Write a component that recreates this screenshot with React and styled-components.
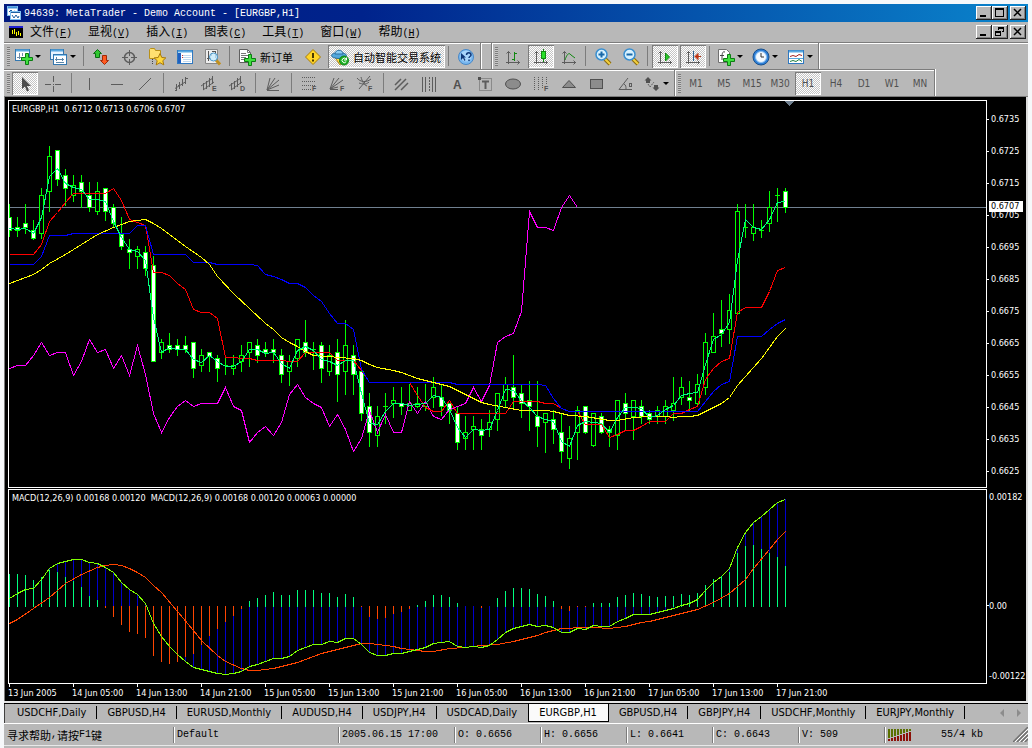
import styled, { createGlobalStyle, css } from "styled-components";

const STEP = 8;
const LEFT = 9;
const ZERO = 606;

// [high, body top, body bottom, low, filled]
const candles = [
  [204, 217, 230, 236, 1], [217, 227, 230, 236, 1], [204, 223, 227, 233, 1], [220, 230, 238, 239, 1],
  [188, 195, 233, 238, 0], [146, 156, 191, 211, 0], [150, 150, 179, 185, 1], [169, 175, 188, 205, 1],
  [175, 185, 195, 201, 0], [175, 182, 191, 207, 1], [182, 195, 207, 211, 1], [182, 191, 211, 214, 0],
  [188, 188, 211, 220, 1], [204, 207, 223, 226, 1], [217, 234, 246, 249, 1], [239, 249, 252, 268, 1],
  [246, 249, 256, 268, 0], [246, 252, 268, 275, 1], [256, 265, 361, 361, 1], [339, 342, 352, 358, 0],
  [333, 345, 349, 352, 1], [339, 345, 349, 355, 1], [336, 345, 349, 352, 1], [342, 342, 368, 377, 1],
  [349, 355, 365, 371, 0], [352, 352, 356, 371, 1], [355, 358, 368, 381, 1], [358, 365, 365, 374, 0],
  [355, 365, 368, 374, 0], [345, 355, 361, 371, 0], [342, 342, 352, 366, 0], [339, 345, 355, 362, 1],
  [342, 349, 352, 356, 1], [339, 349, 352, 362, 1], [349, 355, 374, 382, 1], [355, 361, 371, 385, 0],
  [339, 339, 358, 366, 0], [320, 342, 352, 356, 1], [342, 349, 349, 369, 0], [342, 345, 368, 382, 1],
  [345, 355, 371, 375, 0], [339, 352, 374, 401, 1], [320, 345, 371, 394, 0], [345, 355, 374, 394, 1],
  [371, 371, 413, 420, 1], [393, 406, 432, 446, 1], [406, 416, 435, 446, 0], [393, 406, 406, 423, 0],
  [387, 400, 403, 417, 0], [387, 403, 406, 414, 1], [384, 403, 410, 410, 0], [387, 403, 406, 407, 0],
  [384, 403, 406, 410, 0], [377, 387, 397, 407, 0], [384, 397, 406, 415, 1], [403, 403, 410, 423, 1],
  [406, 413, 442, 449, 1], [416, 432, 438, 449, 0], [416, 426, 429, 449, 0], [419, 429, 435, 449, 1],
  [410, 422, 429, 436, 0], [393, 393, 419, 430, 0], [377, 384, 400, 407, 0], [355, 387, 397, 407, 1],
  [384, 393, 403, 417, 1], [381, 400, 406, 430, 1], [381, 416, 426, 446, 1], [413, 413, 422, 452, 0],
  [410, 419, 429, 443, 1], [413, 432, 451, 462, 1], [426, 438, 458, 468, 0], [406, 410, 432, 459, 0],
  [406, 406, 432, 433, 1], [413, 413, 445, 446, 0], [413, 416, 432, 433, 1], [426, 429, 432, 446, 1],
  [400, 400, 435, 449, 0], [393, 403, 413, 430, 1], [400, 400, 416, 439, 0], [400, 406, 416, 423, 1],
  [410, 413, 419, 423, 1], [406, 410, 416, 423, 0], [400, 406, 416, 423, 0], [377, 403, 410, 420, 0],
  [377, 387, 397, 404, 0], [381, 397, 400, 410, 1], [374, 384, 403, 406, 0], [333, 342, 387, 394, 0],
  [313, 336, 352, 352, 0], [300, 329, 333, 346, 1], [294, 310, 329, 343, 0], [204, 211, 313, 314, 0],
  [204, 227, 227, 237, 0], [204, 227, 233, 240, 0], [220, 230, 230, 237, 0], [191, 207, 223, 231, 0],
  [188, 195, 195, 221, 0], [188, 191, 207, 212, 1],
];

// one value per bar
const tenkan = [
  228, 229, 228, 233, 217, 176, 168, 183, 187, 189, 199, 199, 201, 221, 237, 249, 251, 260, 317, 352,
  347, 349, 349, 359, 362, 355, 361, 366, 366, 361, 349, 349, 353, 352, 363, 368, 350, 346, 350, 359,
  361, 365, 360, 360, 393, 423, 424, 411, 403, 403, 405, 404, 403, 395, 397, 409, 427, 437, 429, 430,
  429, 410, 389, 390, 400, 407, 416, 419, 421, 441, 446, 425, 421, 422, 423, 432, 417, 407, 407, 408,
  417, 415, 409, 405, 395, 393, 392, 364, 339, 334, 322, 260, 219, 227, 229, 219, 202, 201,
];
const chikou = [
  368, 365, 365, 355, 342, 355, 352, 352, 375, 361, 339, 352, 349, 368, 355, 375, 345, 374, 413, 432,
  417, 406, 400, 406, 403, 403, 403, 387, 406, 410, 442, 432, 426, 435, 422, 394, 384, 397, 403, 407,
  426, 414, 429, 451, 438, 410, 432, 414, 432, 432, 401, 413, 401, 416, 419, 409, 406, 403, 387, 401,
  385, 342, 336, 333, 311, 211, 227, 227, 230, 207, 195, 207,
];
const macd = [
  598, 593, 589, 588, 579, 568, 563, 561, 559, 559, 562, 563, 567, 572, 582, 589, 594, 603, 623, 636,
  646, 654, 661, 667, 669, 671, 673, 674, 673, 671, 666, 664, 661, 658, 658, 656, 650, 647, 644, 644,
  641, 642, 638, 638, 644, 652, 655, 655, 653, 653, 651, 649, 647, 643, 642, 641, 646, 647, 646, 647,
  645, 639, 632, 628, 626, 624, 626, 625, 627, 632, 632, 628, 629, 625, 626, 626, 621, 618, 614, 614,
  614, 612, 610, 608, 605, 603, 599, 590, 582, 576, 568, 547, 532, 522, 516, 509, 502, 499,
];
const osma = [
  32, 32, 31, 26, 29, 36, 34, 29, 25, 19, 10, 6, -2, -11, -19, -26, -28, -32, -50, -56, -58, -56, -51,
  -48, -39, -30, -23, -16, -10, -3, 5, 8, 11, 14, 11, 11, 16, 16, 16, 13, 13, 9, 12, 9, -1, -11, -13,
  -12, -8, -6, -3, 1, 5, 11, 11, 9, 3, 0, 0, -2, 0, 8, 15, 18, 18, 17, 12, 10, 5, -3, -5, -1, -1, 3, 3,
  3, 9, 11, 13, 12, 10, 9, 10, 10, 12, 11, 13, 21, 27, 30, 34, 53, 60, 61, 57, 53, 49, 40,
];

// [bar, y] break points
const kijun = [
  [0, 254], [3, 254], [4, 244], [5, 221], [6, 212], [7, 202], [8, 193], [12, 193], [13, 188], [14, 200],
  [15, 219], [16, 222], [17, 225], [18, 272], [19, 272], [20, 275], [21, 283], [22, 289], [23, 309],
  [24, 312], [25, 312], [26, 318], [27, 357], [28, 357], [29, 358], [30, 358], [31, 360], [34, 360],
  [35, 361], [36, 361], [37, 352], [40, 352], [41, 360], [43, 360], [44, 370], [45, 382], [50, 382],
  [51, 395], [52, 407], [53, 411], [54, 411], [55, 400], [56, 413], [62, 413], [63, 401], [66, 401],
  [67, 403], [68, 403], [69, 408], [70, 411], [71, 411], [72, 424], [74, 424], [75, 437], [76, 434],
  [77, 430], [78, 430], [79, 426], [80, 421], [82, 421], [83, 413], [84, 413], [85, 409], [86, 406],
  [87, 379], [88, 368], [89, 361], [90, 358], [91, 312], [92, 307], [94, 307], [95, 291], [96, 270],
  [97, 267],
];
const senkou = [
  [0, 264], [3, 264], [4, 256], [5, 235], [7, 235], [8, 233], [15, 233], [16, 225], [17, 225], [18, 254],
  [22, 254], [23, 262], [25, 262], [26, 264], [30, 264], [31, 265], [32, 274], [33, 276], [34, 279],
  [35, 283], [36, 283], [37, 287], [38, 295], [39, 301], [40, 313], [41, 323], [42, 323], [43, 329],
  [44, 369], [45, 382], [55, 382], [56, 384], [66, 384], [67, 385], [68, 398], [69, 408], [70, 411],
  [86, 411], [87, 401], [88, 391], [89, 384], [90, 381], [91, 336], [94, 336], [95, 329], [96, 323],
  [97, 319],
];
const average = [
  [0, 283], [3, 274], [4, 269], [5, 263], [7, 254], [9, 244], [11, 234], [13, 227], [15, 221], [17, 219],
  [18, 223], [19, 228], [22, 246], [24, 257], [25, 264], [26, 276], [28, 293], [30, 308], [32, 323],
  [33, 329], [34, 337], [35, 342], [36, 346], [37, 351], [38, 355], [40, 356], [41, 357], [43, 358],
  [44, 360], [45, 364], [46, 367], [48, 370], [49, 372], [51, 378], [53, 382], [55, 386], [57, 394],
  [59, 402], [60, 404], [62, 407], [64, 410], [67, 410], [68, 411], [70, 415], [72, 416], [75, 420],
  [76, 420], [78, 417], [80, 416], [82, 416], [83, 417], [84, 416], [85, 416], [86, 415], [87, 411],
  [88, 407], [89, 403], [90, 397], [91, 385], [92, 376], [93, 367], [94, 358], [95, 347], [96, 336],
  [97, 328],
];
const signal = [
  [0, 623], [1, 619], [3, 608], [5, 597], [7, 583], [9, 574], [11, 567], [12, 565], [13, 564], [14, 565],
  [15, 568], [16, 572], [17, 577], [18, 585], [19, 592], [21, 611], [23, 630], [24, 640], [26, 655],
  [27, 661], [29, 668], [30, 670], [31, 670], [33, 668], [36, 662], [39, 653], [42, 647], [43, 645],
  [44, 643], [45, 643], [47, 645], [48, 646], [49, 648], [50, 649], [52, 651], [53, 651], [55, 648],
  [57, 647], [59, 645], [61, 644], [63, 641], [66, 635], [67, 632], [69, 628], [72, 627], [73, 627],
  [75, 628], [77, 626], [79, 622], [80, 621], [83, 615], [86, 609], [88, 602], [90, 593], [92, 579],
  [93, 568], [95, 549], [96, 539], [97, 531],
];

const x = (bar) => LEFT + bar * STEP;
const toPoints = (list) =>
  list
    .map((item, i) => (Array.isArray(item) ? [x(item[0]), item[1]] : [x(i), item]))
    .map(([px, py]) => `${px + 0.5},${py + 0.5}`)
    .join(" ");

const prices = ["0.6735", "0.6725", "0.6715", "0.6705", "0.6695", "0.6685", "0.6675", "0.6665", "0.6655", "0.6645", "0.6635", "0.6625"];
const times = [
  "13 Jun 2005", "14 Jun 05:00", "14 Jun 13:00", "14 Jun 21:00", "15 Jun 05:00", "15 Jun 13:00", "15 Jun 21:00",
  "16 Jun 05:00", "16 Jun 13:00", "16 Jun 21:00", "17 Jun 05:00", "17 Jun 13:00", "17 Jun 21:00",
];
const menus = [["文件", "F"], ["显视", "V"], ["插入", "I"], ["图表", "C"], ["工具", "T"], ["窗口", "W"], ["帮助", "H"]];
const periods = ["M1", "M5", "M15", "M30", "H1", "H4", "D1", "W1", "MN"];
const tabs = [
  "USDCHF,Daily", "GBPUSD,H4", "EURUSD,Monthly", "AUDUSD,H4", "USDJPY,H4", "USDCAD,Daily",
  "EURGBP,H1", "GBPUSD,H4", "GBPJPY,H4", "USDCHF,Monthly", "EURJPY,Monthly",
];

/* ---------- icons ---------- */

const Plus = ({ dx = 0, dy = 0 }) => (
  <path
    transform={`translate(${dx} ${dy})`}
    d="M4.5 .5h3v4h4v3h-4v4h-3v-4h-4v-3h4z"
    fill="#3fe03f"
    stroke="#0b7d12"
  />
);
const Axes = ({ color = "#5c5c5c" }) => (
  <path d="M4.5 16V3.5M2.5 5.5l2-2 2 2M2 14.5h14M13.5 12.5l2 2-2 2" fill="none" stroke={color} />
);
const Letter = ({ children }) => (
  <text x="12" y="16" fontSize="7" fontWeight="700" fontFamily="Liberation Sans" fill="#505050">
    {children}
  </text>
);
const Lens = ({ minus }) => (
  <>
    <path d="M11 11l5 5" stroke="#8a6a10" strokeWidth="4" />
    <path d="M11 11l5 5" stroke="#f2d040" strokeWidth="2" />
    <circle cx="7.5" cy="6.5" r="5.5" fill="#d8f2ff" stroke="#3a8fd0" strokeWidth="1.5" />
    <path d={minus ? "M4.5 6.5h6" : "M4.5 6.5h6M7.5 3.5v6"} stroke="#1868a8" strokeWidth="2" />
  </>
);

const gray = { fill: "none", stroke: "#5c5c5c" };

const icons = {
  newChart: (
    <>
      <rect x=".5" y="1.5" width="14" height="11" fill="#fff" stroke="#3478b0" />
      <path d="M1 2.5h13" stroke="#58a8e0" strokeWidth="2" />
      <path d="M4.5 5v6M2 9.5h7M7.5 5v3" stroke="#6a8aa8" />
      <Plus dx={6} dy={5} />
    </>
  ),
  profiles: (
    <>
      <rect x=".5" y="1.5" width="13" height="10" fill="#e8f4ff" stroke="#3478b0" />
      <path d="M1 2.5h12" stroke="#58a8e0" strokeWidth="2" />
      <rect x="3.5" y="6.5" width="13" height="10" fill="#fff" stroke="#3478b0" />
      <path d="M4 7.5h12" stroke="#8cc8f0" />
      <path d="M6.5 9v4M5 11.5h9M12.5 10v3M6 14.5h8" stroke="#5a86a8" />
    </>
  ),
  market: (
    <>
      <path d="M5.500 1.500l4 4h-2v4h-4v-4h-2z" fill="#30c830" stroke="#0b6d12" />
      <path d="M12.500 16.500l-4-4h2v-5h4v5h2z" fill="#ff5a20" stroke="#a02808" />
    </>
  ),
  target: (
    <g fill="none" stroke="#5c5c5c">
      <circle cx="9.5" cy="9.5" r="5" strokeWidth="1.5" />
      <path d="M9.5 2v6M9.5 11v6M2 9.5h6M11 9.5h6" />
    </g>
  ),
  navigator: (
    <>
      <path d="M1.5 10.500v-9l1-1h4l1 2h5v8z" fill="#ffe070" stroke="#b89018" />
      <path d="M4.5 11v5" stroke="#444" strokeDasharray="1 1" />
      <path d="M12 5.5l1.800 4 4 .4-3 2.800 1 4.200-3.800-2.200-3.800 2.200 1-4.200-3-2.800 4-.4z" fill="#ffd83c" stroke="#a87808" />
    </>
  ),
  terminal: (
    <>
      <rect x="1.5" y="2.5" width="15" height="13" fill="#fff" stroke="#2f78c0" />
      <path d="M2 3.5h14" stroke="#58a8e0" strokeWidth="2" />
      <path d="M3.5 5v10" stroke="#2060c0" strokeWidth="3" />
      <path d="M7 7.5h8M7 9.5h8M7 11.5h8M7 13.5h8" stroke="#c0d8ee" />
      <path d="M6 7.5h1M6 9.5h1" stroke="#d03030" />
    </>
  ),
  tester: (
    <>
      <path d="M1.5 1.5h12v14h-12z" fill="#eee" stroke="#888" />
      <path d="M4.5 3v10M7.5 5v3M11.5 3v7M3 10.5h4M8 3.5h4" stroke="#555" />
      <path d="M12 12l4 4.500" stroke="#c09020" strokeWidth="3" />
      <circle cx="9.5" cy="9" r="4" fill="#c8ecff" fillOpacity=".8" stroke="#4a98cc" />
    </>
  ),
  order: (
    <>
      <path d="M1.5 1.5h8l3 3v10h-11z" fill="#fff" stroke="#606060" />
      <path d="M9.5 1.5v3h3M3 5.5h5M3 7.5h7M3 9.5h5M3 11.5h4" fill="none" stroke="#777" />
      <Plus dx={6} dy={6} />
    </>
  ),
  warning: (
    <>
      <path d="M9 1.5L16.5 9 9 16.5 1.5 9z" fill="#ffd428" stroke="#a87c08" />
      <path d="M9 5v5M9 11.5v2" stroke="#4a3800" strokeWidth="2" />
    </>
  ),
  expert: (
    <>
      <path d="M3 8l6 9 6-9z" fill="#ffd84a" stroke="#b08818" />
      <ellipse cx="8" cy="7.5" rx="7.5" ry="3" fill="#52a8dc" stroke="#2a6fa0" />
      <path d="M4 6c0-5 8-5 8 0z" fill="#8ccef4" stroke="#2a6fa0" />
      <circle cx="13" cy="12.5" r="4.5" fill="#20b428" stroke="#0b7d12" />
      <path d="M15 11a2.200 2.200 0 1 0 .2 2.500M15.500 9.500v2.500h-2.500" fill="none" stroke="#fff" />
    </>
  ),
  help: (
    <>
      <circle cx="9" cy="9" r="7.5" fill="#7ab8f0" stroke="#4888c8" />
      <circle cx="9" cy="8" r="5.5" fill="#a8d4fa" />
      <path d="M4 5v7l2-2 1.500 3 1-1L7 9.500h2z" fill="#103878" />
      <path d="M9.500 7c0-3 4.500-3 4.500 0 0 1.500-2 1.500-2 3M12 11.500v1.500" fill="none" stroke="#103878" strokeWidth="1.5" />
    </>
  ),
  bars: (
    <>
      <Axes />
      <path d="M10.5 4v9M8 11.5h2M11 5.5h2" stroke="#118811" />
    </>
  ),
  candle: (
    <>
      <Axes />
      <path d="M11.5 1v13" stroke="#118811" />
      <rect x="9.5" y="3.5" width="4" height="7" fill="#28e028" stroke="#118811" />
    </>
  ),
  line: (
    <>
      <Axes />
      <path d="M5 12c2-6 4-8 6-5l4 3" fill="none" stroke="#118811" />
    </>
  ),
  zoomIn: <Lens />,
  zoomOut: <Lens minus />,
  scroll: (
    <>
      <Axes />
      <path d="M9.5 5l4 4-4 4z" fill="#28c828" stroke="#118811" />
    </>
  ),
  shift: (
    <>
      <Axes />
      <path d="M9.5 3v10" stroke="#2a6090" />
      <path d="M17 8.5h-6M14 5.5l-3 3 3 3z" fill="#d84018" stroke="#b83010" />
    </>
  ),
  indicator: (
    <>
      <path d="M1.5 1.5h8l3 3v10h-11z" fill="#fff" stroke="#707070" />
      <path d="M8 4c-3-1-3 2-3 8M3 7.5h4" fill="none" stroke="#444" />
      <Plus dx={6} dy={6} />
    </>
  ),
  clock: (
    <>
      <circle cx="9" cy="9" r="8" fill="#2f80d8" stroke="#18508c" />
      <circle cx="9" cy="9" r="5.5" fill="#f4faff" stroke="#8cc0f0" />
      <path d="M9 5v4h3" fill="none" stroke="#333" />
    </>
  ),
  template: (
    <>
      <rect x="1.5" y="2.5" width="15" height="13" fill="#fff" stroke="#2f78c0" />
      <path d="M2 3.5h14" stroke="#58a8e0" strokeWidth="2" />
      <path d="M3 8.5l3-1 3 1 3-2 3 1" fill="none" stroke="#a02020" />
      <path d="M2 10.5h14" stroke="#58a8e0" />
      <path d="M3 13.5l3-1 3 1 3-2 3 2" fill="none" stroke="#208040" />
    </>
  ),
  cursor: <path d="M6 2v12l3-2.500 2 5 2-1-2-4.500h4z" fill="#4c4c4c" />,
  cross: <path d="M9.5 1v6M9.5 11v6M1 9.5h6M11 9.5h6M9 9.5h1" {...gray} />,
  vline: <path d="M9.5 3v12" {...gray} />,
  hline: <path d="M3 9.5h12" {...gray} />,
  trend: <path d="M3 15L15 3" {...gray} />,
  channel: <path d="M3 13.500l11-7M4.500 9v7M7.500 7v7M10.500 4v7M13.500 2v7M3 15.500h2M6 10.500h2M9 9.500h2M13 3.500h3" {...gray} />,
  channelE: (
    <>
      <path d="M1 11L13 3M3 15l11-8M3.5 8v7M6.5 6v8M9.5 3v9M12.5 1v8" {...gray} />
      <Letter>E</Letter>
    </>
  ),
  channelD: (
    <>
      <path d="M1 11L13 3M3 15l11-8M3.5 8v7M6.5 6v8M9.5 3v9M12.5 1v8" {...gray} />
      <Letter>D</Letter>
    </>
  ),
  fan: <path d="M3 15L6 3M3 15L11 3M3 15L15 5M3 15l12-5M3 15.5h12" {...gray} />,
  fibo: (
    <>
      <path d="M2 2.5h14M2 6.5h14M2 10.5h14M2 14.5h9" {...gray} strokeDasharray="1 1" />
      <Letter>F</Letter>
    </>
  ),
  fiboFan: (
    <>
      <path d="M2 14L6 3M2 14L11 3M2 14l13-9M2 14l8-2M2 14.500h8" {...gray} />
      <Letter>F</Letter>
    </>
  ),
  fiboArc: (
    <>
      <path d="M1 3c3 4 9 5 14 1M3 8c3 1 7 2 10-1M14 1L3 14M5 2c1 4 3 8 6 9" {...gray} />
      <Letter>F</Letter>
    </>
  ),
  parallels: <path d="M3 10l6-6M3 15L14 4M9 15l7-7" {...gray} strokeWidth="1.5" />,
  cycles: (
    <>
      <path d="M2.5 2v15M5.5 2v15M12.5 2v15M15.5 2v15" {...gray} />
      <path d="M9.5 2v15" {...gray} strokeDasharray="2 1" />
    </>
  ),
  text: (
    <text x="5" y="14" fontSize="12" fontWeight="700" fontFamily="Liberation Sans" fill="#505050">
      A
    </text>
  ),
  label: (
    <>
      <rect x="3.5" y="3.5" width="12" height="12" {...gray} strokeDasharray="1 1" />
      <path d="M6 6.5h7M9.5 6v8" {...gray} strokeWidth="2" />
      <path d="M2 2h3v3H2z" fill="#505050" />
    </>
  ),
  ellipse: <ellipse cx="9" cy="9" rx="7.5" ry="5" fill="#8c8c8c" stroke="#505050" />,
  zones: (
    <>
      <path d="M2.500 2v13M6.5 2v13M10.5 2v12M14.5 2v8" {...gray} strokeDasharray="1 1" />
      <Letter>F</Letter>
    </>
  ),
  triangle: <path d="M2.5 12.5L9 5.5l6.5 7z" fill="#8c8c8c" stroke="#505050" />,
  rect: <rect x="2.5" y="4.500" width="12" height="9" fill="#8c8c8c" stroke="#505050" />,
  angle: (
    <>
      <path d="M12 3L3 14.5h13M8 9c2 1 2 3 2 5" {...gray} />
      <rect x="13.500" y="8.500" width="2" height="3" {...gray} />
    </>
  ),
  arrows: (
    <>
      <path d="M5 2l3.500 3.500H7V8H3V5.500H1.500zM13 16l3.500-3.500H15V10h-4v2.500H9.500z" fill="#505050" />
      <path d="M5 9l2 3 4-5" {...gray} strokeDasharray="2 1" />
    </>
  ),
};

const Icon = ({ name }) => (
  <Glyph viewBox="0 0 18 18" aria-hidden="true">
    {icons[name]}
  </Glyph>
);

const Tool = ({ name, label, checked, split }) => (
  <ToolButton type="button" aria-label={label || name} $checked={checked} $split={split}>
    <Icon name={name} />
    {split && <Caret />}
  </ToolButton>
);

const WindowButtons = ({ restore }) => (
  <WindowControls>
    <WindowButton type="button" aria-label="minimize">
      <svg width="12" height="10"><path d="M2 8h6" stroke="#000" strokeWidth="2" /></svg>
    </WindowButton>
    <WindowButton type="button" aria-label="maximize">
      <svg width="12" height="10" shapeRendering="crispEdges" fill="none" stroke="#000">
        {restore ? (
          <path d="M4.5 3V.5h5v4H8M4 1.5h6M1.5 4.5h5v4h-5zM1 5.5h6" />
        ) : (
          <path d="M1.5 .5h8v8h-8zM1 1.5h9" />
        )}
      </svg>
    </WindowButton>
    <WindowButton type="button" aria-label="close" $last>
      <svg width="12" height="10"><path d="M2 1l7 7M9 1L2 8" stroke="#000" strokeWidth="1.5" /></svg>
    </WindowButton>
  </WindowControls>
);

/* ---------- charts ---------- */

const PriceChart = () => (
  <Plot $height={388}>
    <PlotTitle>EURGBP,H1{"  "}0.6712 0.6713 0.6706 0.6707</PlotTitle>
    <Canvas>
      <g transform={`translate(-${LEFT} -101)`}>
        <path d="M785 101h9l-4.5 5z" fill="#708090" />
        <path d="M0 207.5h4000" stroke="#708090" />
        {candles.map(([high, top, bottom, low, filled], i) => (
          <g key={i} stroke="#00ff00" fill={filled ? "#ffffff" : "#000000"}>
            <path d={`M${x(i) + 0.5} ${high}V${low + 1}`} />
            {top === bottom ? (
              <path d={`M${x(i) - 2} ${top + 0.5}h5`} />
            ) : (
              <rect x={x(i) - 1.5} y={top + 0.5} width="4" height={bottom - top} />
            )}
          </g>
        ))}
        <g fill="none">
          <polyline points={toPoints(chikou)} stroke="#ff00ff" />
          <polyline points={toPoints(kijun)} stroke="#ff0000" />
          <polyline points={toPoints(senkou)} stroke="#0000ff" />
          <polyline points={toPoints(average)} stroke="#ffff00" />
          <polyline points={toPoints(tenkan)} stroke="#00ff7f" />
        </g>
      </g>
    </Canvas>
  </Plot>
);

const MacdChart = () => (
  <Plot $height={195}>
    <PlotTitle>MACD(12,26,9) 0.00168 0.00120{"  "}MACD(12,26,9) 0.00168 0.00120 0.00063 0.00000</PlotTitle>
    <Canvas>
      <g transform={`translate(-${LEFT} -490)`} fill="none">
        {macd.map((y, i) => (
          <path key={i} d={`M${x(i) + 0.5} ${ZERO}V${y}`} stroke="#0000cd" />
        ))}
        {osma.map((v, i) =>
          v ? (
            <path
              key={i}
              d={`M${x(i) + 0.5} ${v > 0 ? ZERO + 1 : ZERO}V${ZERO - v}`}
              stroke={v > 0 ? "#00ff7f" : "#ff4500"}
            />
          ) : null
        )}
        <polyline points={toPoints(signal)} stroke="#ff4500" />
        <polyline points={toPoints(macd)} stroke="#7fff00" />
      </g>
    </Canvas>
  </Plot>
);

const App = () => {
  return (
    <>
      <GlobalStyle />
      <Page>
        <TitleBar>
          <svg width="16" height="16" viewBox="0 0 16 16" aria-hidden="true">
            <rect x="1.5" y="1.5" width="10" height="9" fill="#fff" stroke="#80c0f0" />
            <path d="M2 2.5h9" stroke="#4090d8" strokeWidth="2" />
            <path d="M3 7l2-2 2 2 2-1" fill="none" stroke="#2060a0" />
            <rect x="4.5" y="6.5" width="10" height="8" fill="#fff" stroke="#80c0f0" />
            <path d="M5 7.5h9M6 10l2 3 2-3 2 3 1-2" fill="none" stroke="#2060a0" />
          </svg>
          <Title>94639: MetaTrader - Demo Account - [EURGBP,H1]</Title>
          <WindowButtons />
        </TitleBar>

        <MenuBar>
          <svg width="14" height="12" viewBox="0 0 14 12" shapeRendering="crispEdges" aria-hidden="true">
            <path d="M0 0h14v12H0z" fill="#000" />
            <path d="M0 1h14" stroke="#2020d0" strokeWidth="2" />
            <path d="M3.5 4v4M5.5 3v5M7.5 6v4M9.5 5v4M11.5 7v3" stroke="#ffff00" />
          </svg>
          <Menus>
            {menus.map(([name, key]) => (
              <MenuItem key={key} type="button">
                {name}
                <Hotkey>
                  (<u>{key}</u>)
                </Hotkey>
              </MenuItem>
            ))}
          </Menus>
          <WindowButtons restore />
        </MenuBar>

        <ToolRow>
          <ToolBar>
            <Grip />
            <Tool name="newChart" split />
            <Tool name="profiles" split />
            <Separator />
            <Tool name="market" />
            <Tool name="target" />
            <Tool name="navigator" />
            <Tool name="terminal" />
            <Tool name="tester" />
            <Separator />
            <TextButton type="button">
              <Icon name="order" />
              新订单
            </TextButton>
            <Tool name="warning" />
            <TextButton type="button" $checked>
              <Icon name="expert" />
              自动智能交易系统
            </TextButton>
            <Separator />
            <Tool name="help" />
          </ToolBar>
          <EmptyBar />
          <ToolBar>
            <Grip />
            <Tool name="bars" />
            <Tool name="candle" checked />
            <Tool name="line" />
            <Separator />
            <Tool name="zoomIn" />
            <Tool name="zoomOut" />
            <Separator />
            <Tool name="scroll" checked />
            <Tool name="shift" checked />
            <Separator />
            <Tool name="indicator" split />
            <Tool name="clock" split />
            <Tool name="template" split />
          </ToolBar>
          <RowRest />
        </ToolRow>

        <ToolRow $last>
          <ToolBar>
            <Grip />
            <Tool name="cursor" checked />
            <Tool name="cross" />
            <Separator $wide />
            <Tool name="vline" />
            <Tool name="hline" />
            <Tool name="trend" />
            <Separator $wide />
            <Tool name="channel" />
            <Tool name="channelE" />
            <Tool name="channelD" />
            <Separator $wide />
            <Tool name="fan" />
            <Separator $wide />
            <Tool name="fibo" />
            <Tool name="fiboFan" />
            <Tool name="fiboArc" />
            <Separator $wide />
            <Tool name="parallels" />
            <Tool name="cycles" />
            <Tool name="text" />
            <Tool name="label" />
            <Tool name="ellipse" />
            <Tool name="zones" />
            <Tool name="triangle" />
            <Tool name="rect" />
            <Tool name="angle" />
            <Tool name="arrows" split />
          </ToolBar>
          <ToolBar>
            <Grip />
            {periods.map((period) => (
              <PeriodButton key={period} type="button" $checked={period === "H1"}>
                {period}
              </PeriodButton>
            ))}
          </ToolBar>
        </ToolRow>

        <ChartWindow>
          <PriceChart />
          <PriceAxis>
            {prices.map((price) => (
              <PriceLabel key={price}>{price}</PriceLabel>
            ))}
            <CurrentPrice>0.6707</CurrentPrice>
          </PriceAxis>
          <MacdChart />
          <MacdAxis>
            <MacdLabel $gap={93}>0.00182</MacdLabel>
            <MacdLabel $gap={55} $tick>0.00</MacdLabel>
            <MacdLabel $gap={0}>-0.00122</MacdLabel>
          </MacdAxis>
          <TimeAxis>
            {times.map((time) => (
              <TimeLabel key={time}>{time}</TimeLabel>
            ))}
          </TimeAxis>
        </ChartWindow>

        <TabBar>
          {tabs.map((tab, i) => (
            <Tab key={i} type="button" $active={i === 6} $plain={i === 5}>
              {tab}
            </Tab>
          ))}
          <TabArrows>
            <svg width="24" height="8" viewBox="0 0 24 8" fill="#8c8c8c">
              <path d="M5 0v8L1 4zM18 0v8l4-4z" />
            </svg>
          </TabArrows>
        </TabBar>

        <StatusBar>
          <StatusCell $width={169}>
            <Cjk>寻求帮助</Cjk>,<Cjk>请按</Cjk>F1<Cjk>键</Cjk>
          </StatusCell>
          <StatusCell $width={165}>Default</StatusCell>
          <StatusCell $width={116}>2005.06.15 17:00</StatusCell>
          <StatusCell $width={86}>O: 0.6656</StatusCell>
          <StatusCell $width={86}>H: 0.6656</StatusCell>
          <StatusCell $width={86}>L: 0.6641</StatusCell>
          <StatusCell $width={86}>C: 0.6643</StatusCell>
          <StatusCell $width={86}>V: 509</StatusCell>
          <StatusCell>
            <svg width="24" height="12" shapeRendering="crispEdges" aria-hidden="true">
              {[0, 1, 2, 3, 4, 5, 6, 7].map((i) => (
                <g key={i}>
                  <rect x={i * 3} y="0" width="2" height={9 - i} fill="#5a7000" />
                  <rect x={i * 3} y={10 - i} width="2" height={2 + i} fill="#8c1008" />
                </g>
              ))}
            </svg>
            <Traffic>55/4 kb</Traffic>
            <SizeGrip width="15" height="15" viewBox="0 0 15 15">
              <path d="M0 15L15 0M4 15L15 4M8 15l7-7M12 15l3-3" stroke="#707070" strokeWidth="1.5" />
              <path d="M2 15L15 2M6 15l9-9M10 15l5-5" stroke="#fff" />
            </SizeGrip>
          </StatusCell>
        </StatusBar>
      </Page>
    </>
  );
};

const dither = css`
  background: repeating-conic-gradient(#ffffff 0 25%, #c4c4c4 0 50%) 0 0 / 2px 2px;
  box-shadow: inset 1px 1px #7c7c7c, inset -1px -1px #ffffff;
`;

const GlobalStyle = createGlobalStyle`
  * {
    box-sizing: border-box;
  }
  body {
    margin: 0;
    background: #f6f8fa;
  }
  button {
    margin: 0;
    padding: 0;
    border: 0;
    background: none;
    color: inherit;
    font: inherit;
  }
  svg {
    display: block;
    flex: none;
  }
`;

const Page = styled.div`
  display: flex;
  flex-direction: column;
  min-height: 100vh;
  background: #b8b8b8;
  border: 4px solid #f6f8fa;
  border-bottom: 0;
  overflow: hidden;
  color: #000000;
  font-family: "Liberation Mono", "Noto Sans CJK SC", monospace;
  font-size: 10px;
`;

const TitleBar = styled.header`
  display: flex;
  align-items: center;
  gap: 2px;
  height: 18px;
  padding: 0 2px;
  background: linear-gradient(90deg, #001a80, #00238c 35%, #0a84cc);
  color: #ffffff;
`;

const Title = styled.div`
  flex: 1;
  white-space: pre;
`;

const WindowControls = styled.div`
  display: flex;
  margin-left: auto;
`;

const WindowButton = styled.button`
  display: flex;
  align-items: center;
  justify-content: center;
  width: 16px;
  height: 14px;
  margin-left: ${(props) => (props.$last ? "2px" : 0)};
  background: #b8b8b8;
  box-shadow: inset -1px -1px #202020, inset 1px 1px #ffffff, inset -2px -2px #808080;
`;

const MenuBar = styled.nav`
  display: flex;
  align-items: center;
  height: 20px;
  padding: 0 2px 0 5px;
`;

const Menus = styled.div`
  display: flex;
  margin-left: -1px;
`;

const MenuItem = styled.button`
  display: flex;
  align-items: baseline;
  padding: 0 8px;
  font-family: "Noto Sans CJK SC", sans-serif;
  font-size: 12px;
  line-height: 18px;
`;

const Hotkey = styled.span`
  font-family: "Liberation Mono", monospace;
  font-size: 10px;
`;

const ToolRow = styled.div`
  display: flex;
  height: ${(props) => (props.$last ? "28px" : "27px")};
  border-bottom: ${(props) => (props.$last ? "1px solid #7c7c7c" : 0)};
`;

const ToolBar = styled.div`
  display: flex;
  align-items: center;
  border-top: 1px solid #7c7c7c;
  border-right: 1px solid #7c7c7c;
  box-shadow: inset 0 1px #ffffff, 1px 0 #ffffff;
`;

const EmptyBar = styled(ToolBar)`
  width: 11px;
`;

const RowRest = styled.div`
  flex: 1;
  border-top: 1px solid #7c7c7c;
  box-shadow: inset 0 1px #ffffff;
`;

const Grip = styled.div`
  width: 3px;
  height: 19px;
  margin: 0 1px 0 3px;
  background: repeating-linear-gradient(#7c7c7c 0 1px, #c8c8c8 1px 2px);
`;

const Separator = styled.div`
  width: 1px;
  height: 20px;
  margin: ${(props) => (props.$wide ? "0 3px 0 4px" : "0 3px 0 2px")};
  background: #7c7c7c;
`;

const ToolButton = styled.button`
  display: flex;
  align-items: center;
  justify-content: ${(props) => (props.$split ? "flex-start" : "center")};
  gap: 2px;
  width: ${(props) => (props.$split ? "35px" : props.$checked ? "26px" : "28px")};
  height: 23px;
  margin: ${(props) => (props.$checked ? "1px 1px 0" : "1px 0 0")};
  padding-left: ${(props) => (props.$split ? "4px" : 0)};
  ${(props) => props.$checked && dither}
`;

const TextButton = styled(ToolButton)`
  justify-content: flex-start;
  gap: 4px;
  width: ${(props) => (props.$checked ? "117px" : "66px")};
  padding-left: ${(props) => (props.$checked ? "3px" : "5px")};
  font-family: "Noto Sans CJK SC", sans-serif;
  font-size: 11px;
  white-space: nowrap;
`;

const PeriodButton = styled(ToolButton)`
  color: #505050;
  font-family: "DejaVu Sans Condensed", "DejaVu Sans", sans-serif;
`;

const Glyph = styled.svg`
  width: 18px;
  height: 18px;
  overflow: visible;
`;

const Caret = styled.span`
  border: 3px solid transparent;
  border-top-color: #000000;
  border-bottom: 0;
`;

const ChartWindow = styled.main`
  display: grid;
  grid-template-columns: 1fr 39px;
  grid-template-rows: 388px 195px 17px;
  row-gap: 1px;
  height: 604px;
  padding: 3px 0 0 3px;
  border-left: 1px solid #7c7c7c;
  border-right: 2px solid #dcdcdc;
  background: #000000;
  color: #ffffff;
  font-family: "DejaVu Sans Condensed", "DejaVu Sans", sans-serif;
  font-size: 9px;
`;

const Plot = styled.section`
  position: relative;
  min-width: 0;
  height: ${(props) => props.$height}px;
  border: 1px solid #ffffff;
`;

const Canvas = styled.svg`
  width: 100%;
  height: 100%;
  overflow: hidden;
  shape-rendering: crispEdges;
`;

const PlotTitle = styled.div`
  position: absolute;
  top: 2px;
  left: 3px;
  line-height: 12px;
  white-space: pre;
`;

const PriceAxis = styled.div`
  position: relative;
  padding-top: 3px;
`;

const PriceLabel = styled.div`
  display: flex;
  align-items: center;
  gap: 2px;
  height: 32px;

  &::before {
    content: "";
    width: 2px;
    height: 1px;
    background: #ffffff;
  }
`;

const CurrentPrice = styled.div`
  position: absolute;
  top: 101px;
  left: 2px;
  width: 34px;
  padding-left: 2px;
  background: #ffffff;
  color: #000000;
  line-height: 11px;
`;

const MacdAxis = styled.div`
  display: flex;
  flex-direction: column;
`;

const MacdLabel = styled.div`
  display: flex;
  align-items: center;
  height: 16px;
  margin-bottom: ${(props) => props.$gap}px;
  white-space: nowrap;

  &::before {
    content: "";
    width: 2px;
    height: 1px;
    background: ${(props) => (props.$tick ? "#ffffff" : "transparent")};
  }
`;

const TimeAxis = styled.div`
  display: flex;
  grid-column: 1 / -1;
  margin-top: -1px;
`;

const TimeLabel = styled.div`
  width: 64px;
  line-height: 12px;
  white-space: nowrap;

  &::before {
    content: "";
    display: block;
    width: 1px;
    height: 3px;
    margin-left: 1px;
    background: #ffffff;
  }
`;

const TabBar = styled.div`
  display: flex;
  align-items: flex-start;
  height: 23px;
  padding-left: 3px;
  border-top: 2px solid #e4e4e4;
  border-bottom: 1px solid #ffffff;
  box-shadow: inset 0 1px #000000, inset 1px 0 #404040;
  font-family: "DejaVu Sans Condensed", "DejaVu Sans", sans-serif;
  font-size: 11px;
`;

const Tab = styled.button`
  display: flex;
  align-items: center;
  height: 19px;
  white-space: nowrap;

  &::before {
    content: "";
    width: 10px;
  }

  &::after {
    content: "";
    width: 10px;
    height: 13px;
    border-right: 1px solid ${(props) => (props.$active || props.$plain ? "transparent" : "#000000")};
  }

  ${(props) =>
    props.$active &&
    css`
      border: 1px solid #000000;
      background: #fafafa;
    `}
`;

const TabArrows = styled.div`
  margin: 6px 5px 0 auto;
`;

const StatusBar = styled.footer`
  display: flex;
  align-items: center;
  height: 22px;
  border-bottom: 1px solid #e8e8e8;
`;

const StatusCell = styled.div`
  display: flex;
  align-items: center;
  flex: ${(props) => (props.$width ? `0 0 ${props.$width}px` : 1)};
  height: 16px;
  padding-left: 3px;
  white-space: pre;

  & + & {
    border-left: 1px solid #7c7c7c;
    box-shadow: inset 1px 0 #ffffff;
  }
`;

const Cjk = styled.span`
  font-family: "Noto Sans CJK SC", sans-serif;
  font-size: 11px;
`;

const Traffic = styled.span`
  margin-left: 29px;
`;

const SizeGrip = styled.svg`
  margin-left: auto;
`;

export default App;
